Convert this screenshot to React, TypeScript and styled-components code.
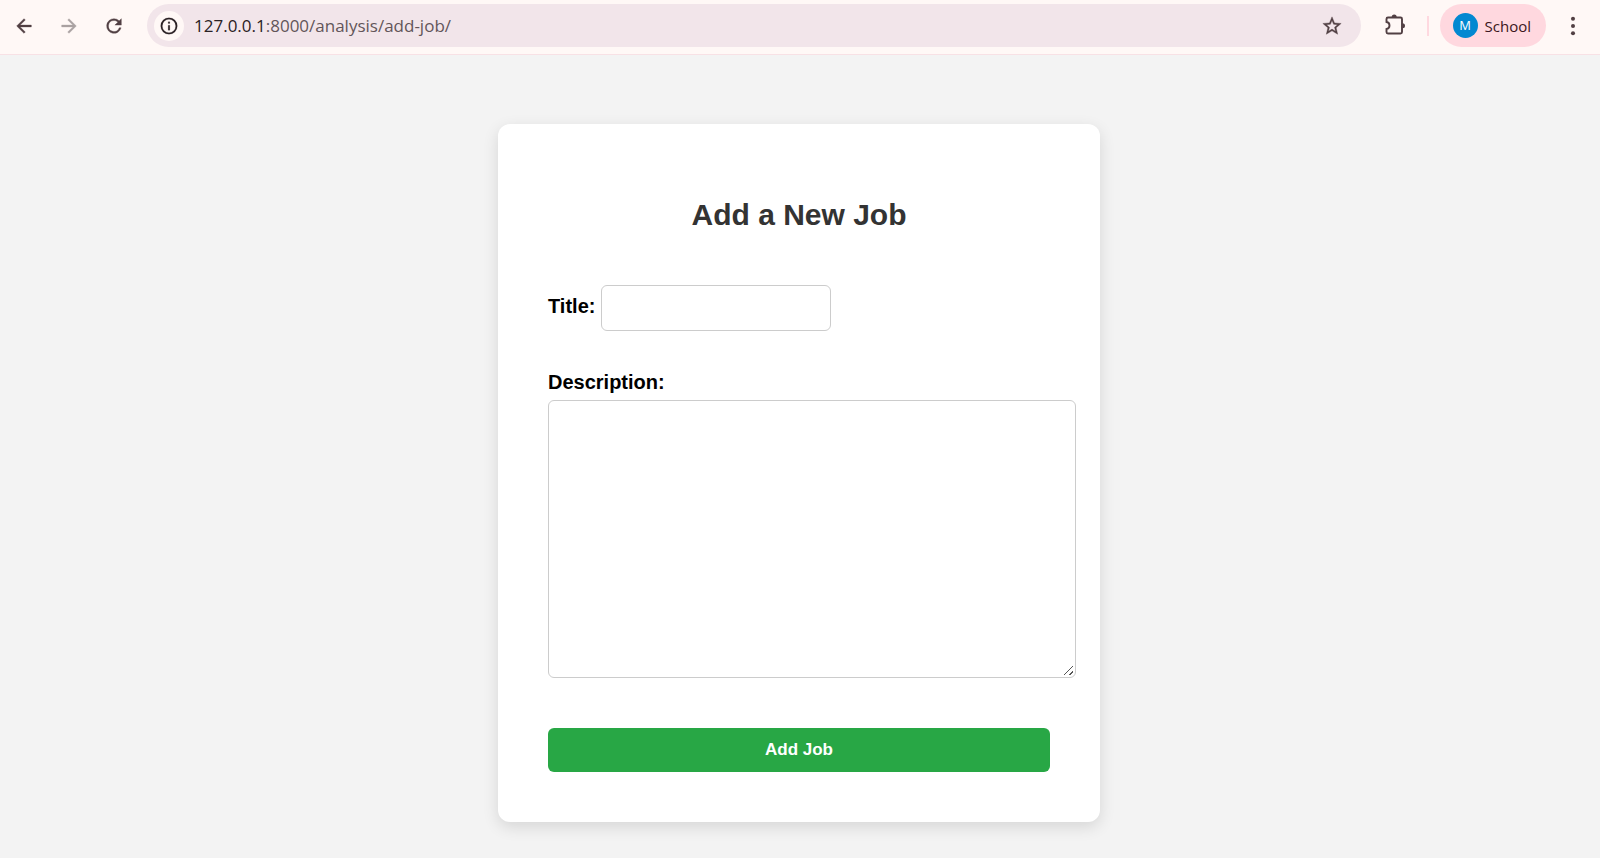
import React from "react";
import styled, { createGlobalStyle } from "styled-components";

const GlobalStyle = createGlobalStyle`
  *, *::before, *::after { box-sizing: border-box; }
  html, body { margin: 0; background: #f3f3f3; }
  body { font-family: "Liberation Sans", Arial, sans-serif; color: #000; }
`;

const Toolbar = styled.header`
  display: flex;
  align-items: center;
  padding: 4px 13px 7px 10px;
  background: #fff8f6;
  border-bottom: 1px solid #f8e1e5;
  font-family: "Open Sans", "Segoe UI", sans-serif;
`;

const Navigation = styled.nav`
  display: flex;
  gap: 17px;
  margin-right: 19px;
`;

const IconButton = styled.button<{ $size?: number; $color?: string; $fill?: string }>`
  display: flex;
  flex: none;
  align-items: center;
  justify-content: center;
  width: ${(p) => p.$size ?? 28}px;
  height: ${(p) => p.$size ?? 28}px;
  padding: 0;
  border: 0;
  border-radius: 50%;
  background: ${(p) => p.$fill ?? "transparent"};
  color: ${(p) => p.$color ?? "#513f43"};
`;

const AddressBar = styled.div`
  display: flex;
  flex: 1;
  align-items: center;
  min-width: 0;
  height: 43px;
  padding: 0 15px 0 7px;
  border-radius: 22px;
  background: #f2e5ea;
`;

const Address = styled.a`
  flex: 1;
  min-width: 0;
  margin-left: 10px;
  overflow: hidden;
  color: #625559;
  font-size: 17px;
  line-height: 24px;
  text-decoration: none;
  white-space: nowrap;
`;

const Host = styled.span`
  color: #2a2124;
`;

const Actions = styled.div`
  display: flex;
  align-items: center;
  margin-left: 21px;
`;

const Divider = styled.span`
  width: 2px;
  height: 20px;
  margin: 0 11px 0 17px;
  background: #ffd9e0;
`;

const Profile = styled.button`
  display: flex;
  align-items: center;
  gap: 7px;
  height: 43px;
  margin-right: 13px;
  padding: 0 15px 0 13px;
  border: 0;
  border-radius: 22px;
  background: #ffd8df;
  color: #3a1520;
  font-family: inherit;
  font-size: 15px;
  line-height: 24px;
`;

const Avatar = styled.span`
  width: 25px;
  height: 25px;
  border-radius: 50%;
  background: #0288d1;
  color: #fff;
  font-size: 13px;
  line-height: 25px;
  text-align: center;
`;

const Page = styled.main`
  padding: 69px 22px 36px 20px;
`;

const Card = styled.form`
  width: 100%;
  max-width: 602px;
  margin: 0 auto;
  padding: 74px 50px 50px;
  border-radius: 12px;
  background: #fff;
  box-shadow: 0 5px 16px rgba(0, 0, 0, 0.12);
`;

const Heading = styled.h1`
  margin: 0 0 53px;
  color: #333;
  font-size: 30px;
  line-height: 34px;
  text-align: center;
`;

const TitleRow = styled.div`
  display: flex;
  align-items: baseline;
  gap: 6px;
  margin-bottom: 39px;
`;

const Label = styled.label`
  display: block;
  font-size: 20px;
  font-weight: 700;
  line-height: 24px;
`;

const TextInput = styled.input`
  width: 230px;
  height: 46px;
  padding: 12px;
  border: 1px solid #ccc;
  border-radius: 6px;
  background: #fff;
  font-family: inherit;
  font-size: 16px;
`;

const TextArea = styled.textarea`
  display: block;
  width: calc(100% + 26px);
  height: 278px;
  margin: 6px 0 50px;
  padding: 12px;
  border: 1px solid #ccc;
  border-radius: 6px;
  background: #fff;
  font-family: inherit;
  font-size: 16px;
  resize: both;

  &::-webkit-resizer {
    background: linear-gradient(
        135deg,
        transparent 45%,
        #555 45% 55%,
        transparent 55% 76%,
        #555 76% 86%,
        transparent 86%
      )
      4px 4px / 9px 9px no-repeat;
  }
`;

const SubmitButton = styled.button`
  display: block;
  width: 100%;
  height: 44px;
  padding: 0;
  border: 0;
  border-radius: 6px;
  background: #28a745;
  color: #fff;
  font-family: inherit;
  font-size: 17px;
  font-weight: 700;
  line-height: 20px;
`;

const Svg = ({ size = 22, box = 24, weight = 0.4, children }: { size?: number; box?: number; weight?: number; children: React.ReactNode }) => (
  <svg width={size} height={size} viewBox={`0 0 ${box} ${box}`} fill="currentColor" stroke="currentColor" strokeWidth={weight} aria-hidden="true">
    {children}
  </svg>
);

export default function App() {
  return (
    <>
      <GlobalStyle />
      <Toolbar>
        <Navigation aria-label="Browser">
          <IconButton aria-label="Back">
            <Svg><path d="M20 11H7.83l5.59-5.59L12 4l-8 8 8 8 1.41-1.41L7.83 13H20v-2z" /></Svg>
          </IconButton>
          <IconButton aria-label="Forward" $color="#aaa2a2">
            <Svg><path d="M12 4l-1.41 1.41L16.17 11H4v2h12.17l-5.58 5.59L12 20l8-8z" /></Svg>
          </IconButton>
          <IconButton aria-label="Reload">
            <Svg><path d="M17.65 6.35A7.96 7.96 0 0 0 12 4a8 8 0 1 0 7.73 10h-2.08A6 6 0 1 1 12 6c1.66 0 3.14.69 4.22 1.78L13 11h7V4z" /></Svg>
          </IconButton>
        </Navigation>
        <AddressBar>
          <IconButton aria-label="Site information" $size={30} $fill="#fff8f6" $color="#2a2124">
            <Svg size={20} weight={0.2}><path d="M11 7h2v2h-2zm0 4h2v6h-2zm1-9a10 10 0 1 0 0 20 10 10 0 0 0 0-20zm0 18a8 8 0 1 1 0-16 8 8 0 0 1 0 16z" /></Svg>
          </IconButton>
          <Address href="#"><Host>127.0.0.1</Host>:8000/analysis/add-job/</Address>
          <IconButton aria-label="Bookmark">
            <Svg><path d="M22 9.24l-7.19-.62L12 2 9.19 8.63 2 9.24l5.46 4.73L5.82 21 12 17.27 18.18 21l-1.63-7.03zM12 15.4l-3.76 2.27 1-4.28-3.32-2.88 4.38-.38L12 6.1l1.71 4.04 4.38.38-3.32 2.88 1 4.28z" /></Svg>
          </IconButton>
        </AddressBar>
        <Actions>
          <IconButton aria-label="Extensions">
            <Svg size={28} box={28} weight={0}>
              <path d="M6 5.500H18.500Q20 5.500 20 7V20Q20 21.500 18.500 21.500H6Q4.500 21.500 4.500 20V17C8.500 16.500 8.500 10.500 4.500 10V7Q4.500 5.500 6 5.500Z" fill="none" stroke="currentColor" strokeWidth="1.900" />
              <path d="M9.700 5a2.500 2.500 0 0 1 5 0zM20.500 11.200a2.500 2.500 0 0 1 0 5z" />
            </Svg>
          </IconButton>
          <Divider />
          <Profile type="button"><Avatar>M</Avatar>School</Profile>
          <IconButton aria-label="Menu">
            <Svg weight={0}><circle cx="12" cy="4.200" r="2.200" /><circle cx="12" cy="12" r="2.200" /><circle cx="12" cy="19.800" r="2.200" /></Svg>
          </IconButton>
        </Actions>
      </Toolbar>
      <Page>
        <Card onSubmit={(e) => e.preventDefault()}>
          <Heading>Add a New Job</Heading>
          <TitleRow>
            <Label htmlFor="title">Title:</Label>
            <TextInput id="title" name="title" type="text" />
          </TitleRow>
          <Label htmlFor="description">Description:</Label>
          <TextArea id="description" name="description" />
          <SubmitButton type="submit">Add Job</SubmitButton>
        </Card>
      </Page>
    </>
  );
}
